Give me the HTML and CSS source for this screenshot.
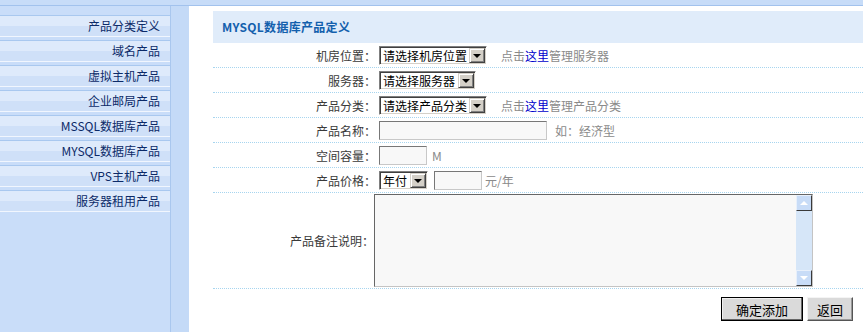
FILE: index.html
```html
<!DOCTYPE html>
<html lang="zh-CN">
<head>
<meta charset="utf-8">
<title>MYSQL数据库产品定义</title>
<link rel="stylesheet" href="styles.css">
</head>
<body>
<div class="topbar"></div>
<div class="layout">
  <aside class="sidebar">
    <ul class="menu">
      <li class="menu-item">产品分类定义</li>
      <li class="menu-item">域名产品</li>
      <li class="menu-item">虚拟主机产品</li>
      <li class="menu-item">企业邮局产品</li>
      <li class="menu-item">MSSQL数据库产品</li>
      <li class="menu-item">MYSQL数据库产品</li>
      <li class="menu-item">VPS主机产品</li>
      <li class="menu-item">服务器租用产品</li>
    </ul>
    <div class="strip"></div>
  </aside>
  <main class="main">
    <h1 class="title">MYSQL数据库产品定义</h1>
    <div class="form">
      <div class="row">
        <div class="lbl">机房位置：</div>
        <div class="val">
          <span class="sel sel-wide"><span class="sel-text">请选择机房位置</span><span class="sel-btn"><i class="tri"></i></span></span>
          <span class="hint hint-far">点击<a class="link">这里</a>管理服务器</span>
        </div>
      </div>
      <div class="row">
        <div class="lbl">服务器：</div>
        <div class="val">
          <span class="sel sel-mid"><span class="sel-text">请选择服务器</span><span class="sel-btn"><i class="tri"></i></span></span>
        </div>
      </div>
      <div class="row">
        <div class="lbl">产品分类：</div>
        <div class="val">
          <span class="sel sel-wide"><span class="sel-text">请选择产品分类</span><span class="sel-btn"><i class="tri"></i></span></span>
          <span class="hint hint-far">点击<a class="link">这里</a>管理产品分类</span>
        </div>
      </div>
      <div class="row">
        <div class="lbl">产品名称：</div>
        <div class="val">
          <input class="inp inp-name" type="text">
          <span class="hint hint-name">如：经济型</span>
        </div>
      </div>
      <div class="row">
        <div class="lbl">空间容量：</div>
        <div class="val">
          <input class="inp inp-small" type="text">
          <span class="hint hint-m">M</span>
        </div>
      </div>
      <div class="row">
        <div class="lbl">产品价格：</div>
        <div class="val">
          <span class="sel sel-year"><span class="sel-text">年付</span><span class="sel-btn"><i class="tri"></i></span></span>
          <input class="inp inp-small inp-price" type="text">
          <span class="hint hint-unit">元/年</span>
        </div>
      </div>
      <div class="row row-tall">
        <div class="lbl">产品备注说明：</div>
        <div class="val">
          <div class="textbox">
            <textarea class="ta"></textarea>
            <div class="scroll">
              <span class="sb-btn"><i class="tri-up"></i></span>
              <span class="sb-track"></span>
              <span class="sb-btn"><i class="tri-down"></i></span>
            </div>
          </div>
        </div>
      </div>
      <div class="actions">
        <button class="btn btn-default" type="button">确定添加</button>
        <button class="btn" type="button">返回</button>
      </div>
    </div>
  </main>
</div>
</body>
</html>
```
FILE: styles.css
```css
* { box-sizing: border-box; }
html, body { margin: 0; padding: 0; }
body {
  background: #fff;
  font-family: "Noto Sans CJK SC", "Liberation Sans", sans-serif;
  font-size: 12px;
  color: #333;
  overflow: hidden;
  height: 332px;
}
.topbar {
  height: 6px;
  background: #c7dcf8;
  border-bottom: 1px solid #a2c2ed;
}
.layout {
  display: flex;
  height: 326px;
}
.sidebar {
  width: 189px;
  flex: none;
  display: flex;
  background: #c9ddf9;
}
.menu {
  list-style: none;
  margin: 0;
  padding: 9px 0 0;
  width: 171px;
  border-right: 1px solid #a9c7ee;
}
.menu-item {
  height: 25px;
  border-top: 1px solid #a9c8ef;
  background: linear-gradient(to bottom,
    #deeafb 0, #deeafb 10px,
    #cfe0f8 10px, #cfe0f8 20px,
    #f1f6fe 20px, #f1f6fe 21px,
    #c9ddf9 21px);
  text-align: right;
  padding-right: 10px;
  line-height: 20px;
  color: #0c2a68;
  font-size: 12px;
}
.strip {
  flex: 1;
  background: #c4daf7;
}
.main {
  flex: 1;
  min-width: 0;
  padding: 5px 0 0 24px;
}
.title {
  margin: 0;
  height: 32px;
  line-height: 32px;
  padding-left: 9px;
  background: #e0ecfa;
  color: #1360ad;
  font-size: 12px;
  font-weight: bold;
  letter-spacing: 0.3px;
}
.row {
  display: grid;
  grid-template-columns: 166px 1fr;
  align-items: center;
  height: 25px;
  border-bottom: 1px dotted #a7d5ef;
}
.row-tall { height: 96px; align-items: start; }
.row-tall .lbl { align-self: center; padding-right: 5px; }
.lbl {
  text-align: right;
  padding-right: 3px;
  color: #3a3a3a;
  white-space: nowrap;
}
.val {
  display: flex;
  align-items: center;
  white-space: nowrap;
}
.sel {
  display: inline-flex;
  align-items: center;
  height: 19px;
  background: #fff;
  border: 1px solid;
  border-color: #7f7f7f #fff #fff #7f7f7f;
  box-shadow: inset 1px 1px 0 #404040, inset -1px -1px 0 #d4d0c8;
  padding: 1px;
  color: #000;
}
.sel-wide { width: 108px; }
.sel-mid { width: 97px; }
.sel-year { width: 49px; }
.sel-text {
  flex: 1;
  padding-left: 2px;
  line-height: 15px;
  overflow: hidden;
}
.sel-btn {
  width: 16px;
  height: 15px;
  background: #d4d0c8;
  border: 1px solid;
  border-color: #d4d0c8 #404040 #404040 #d4d0c8;
  box-shadow: inset 1px 1px 0 #fff, inset -1px -1px 0 #808080;
  display: flex;
  align-items: center;
  justify-content: center;
}
.tri {
  width: 0;
  height: 0;
  border-left: 4px solid transparent;
  border-right: 4px solid transparent;
  border-top: 4px solid #000;
  margin-top: 1px;
}
.hint { color: #8a8a8a; }
.hint-far { margin-left: 14px; }
.hint-name { margin-left: 8px; }
.hint-m { margin-left: 5px; }
.hint-unit { margin-left: 3px; }
.link { color: #0000cc; text-decoration: none; }
.inp {
  height: 19px;
  margin: 0;
  padding: 0 2px;
  background: #f8f8f8;
  border: 1px solid;
  border-color: #777 #c8c8c8 #c8c8c8 #777;
  font: inherit;
  outline: none;
}
.inp-name { width: 168px; }
.inp-small { width: 48px; }
.inp-price { margin-left: 6px; }
.textbox {
  display: flex;
  width: 439px;
  height: 93px;
  margin: 1px 0 0 -5px;
  background: #f8f8f8;
  border: 1px solid;
  border-color: #666 #c4c4c4 #c4c4c4 #666;
}
.ta {
  flex: 1;
  border: 0;
  margin: 0;
  padding: 2px;
  background: transparent;
  resize: none;
  outline: none;
  font: inherit;
}
.scroll {
  width: 16px;
  display: flex;
  flex-direction: column;
  background: #d6e6f8;
}
.sb-btn {
  height: 16px;
  background: #c8dcf7;
  border: 1px solid;
  border-color: #e8f0fb #3a3a3a #3a3a3a #e8f0fb;
  display: flex;
  align-items: center;
  justify-content: center;
}
.sb-track { flex: 1; }
.tri-up {
  width: 0; height: 0;
  border-left: 4px solid transparent;
  border-right: 4px solid transparent;
  border-bottom: 4px solid #fff;
}
.tri-down {
  width: 0; height: 0;
  border-left: 4px solid transparent;
  border-right: 4px solid transparent;
  border-top: 4px solid #fff;
}
.actions {
  display: flex;
  justify-content: flex-end;
  gap: 4px;
  padding: 8px 10px 0 0;
}
.btn {
  height: 24px;
  margin: 0;
  padding: 0;
  background: #dadada;
  font: inherit;
  font-size: 13px;
  color: #000;
  border: 1px solid;
  border-color: #f4f4f4 #555 #555 #f4f4f4;
  box-shadow: inset -1px -1px 0 #999;
  width: 46px;
}
.btn-default {
  width: 82px;
  border-color: #000;
  box-shadow: inset -1px -1px 0 #666, inset 1px 1px 0 #f0f0f0;
}
```
